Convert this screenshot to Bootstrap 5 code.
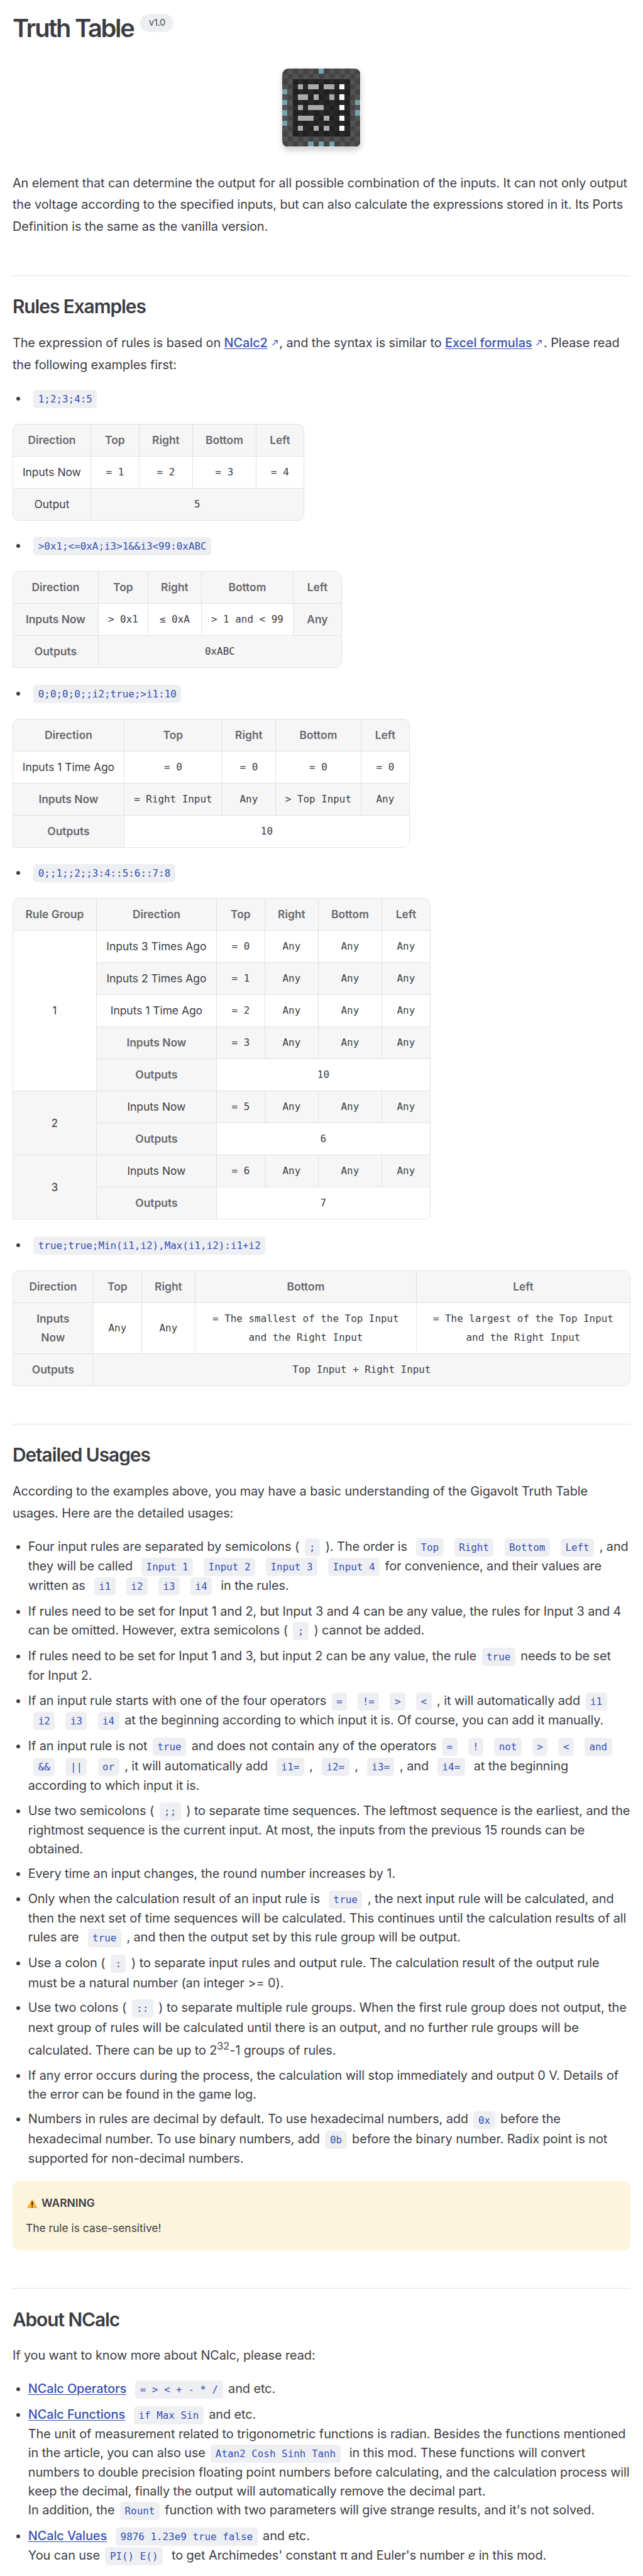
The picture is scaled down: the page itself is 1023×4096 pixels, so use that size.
<!DOCTYPE html>
<html lang="en">
<head>
<meta charset="utf-8">
<meta name="viewport" content="width=device-width, initial-scale=1">
<title>Truth Table</title>
<link href="https://cdn.jsdelivr.net/npm/bootstrap@5.3.0/dist/css/bootstrap.min.css" rel="stylesheet">
<style>
html{font-size:19.8917px}
body{font-family:Inter,"Noto Sans",sans-serif;font-size:1rem;line-height:1.75rem;letter-spacing:-.0043rem;color:#3c3c43;background:#fff;text-rendering:optimizeLegibility;overflow-x:hidden}
.doc{padding:1rem 1rem 0}
h1,h2{font-weight:600;color:#3c3c43;margin:0}
h1{font-size:2rem;line-height:2.5rem;letter-spacing:-.057em}
h2{font-size:1.5rem;line-height:2rem;letter-spacing:-.035em;margin:3rem 0 1rem;padding-top:1.5rem;border-top:1px solid #e2e2e3}
p{margin:0 0 1rem}
.ver{font-size:.75rem;line-height:1.3rem;letter-spacing:-.03rem;font-weight:500;height:1.43rem;padding:.065rem .64rem .065rem .67rem;border-radius:.75rem;background:#eeeff3;color:rgba(60,60,67,.78);margin:.13rem 0 0 .55rem}
.chip{display:block;width:6.25rem;height:6.25rem;margin:2rem auto;border-radius:.5rem;box-shadow:0 .25rem .5rem rgba(0,0,0,.2)}
ul{margin:calc(1rem + 1px) 0 calc(1rem - 1px);padding-left:1.25rem;line-height:1.5rem}
li+li{margin-top:.5rem}
li code{font-family:"DejaVu Sans Mono","Liberation Mono",monospace;font-size:.7995rem;line-height:1.518rem;letter-spacing:0;color:#3451b2;background:#eeeff3;border-radius:.25rem;padding:.25rem .375rem;margin:0 .43rem;white-space:pre}
.doc a{color:#3451b2;font-weight:500;text-decoration:underline;text-underline-offset:.125rem}
.ext{width:.6875rem;height:.6875rem;margin-left:.25rem;fill:#3451b2;vertical-align:baseline}
sup{position:static;font-size:.82em;line-height:1.5rem;vertical-align:super}
.frame{border:1px solid #e2e2e3;border-radius:.5rem;overflow:hidden;width:fit-content;margin:1.204rem 0 1.277rem}
.frame.sq{border-bottom-left-radius:0}
.rules{table-layout:fixed;color:#3c3c43;font-size:.875rem;line-height:1.5rem;letter-spacing:0;border-collapse:separate;border-spacing:0}
.rules>thead{vertical-align:middle}
.rules>*>tr>*{padding:0;height:51px;color:#3c3c43;background:#fff;border:0 solid #e2e2e3;border-width:0 1px 1px 0;box-shadow:none;white-space:nowrap}
.rules>*>tr>.e{border-right-width:0}
.rules>*>tr>.b{border-bottom-width:0;height:50px}
.rules>tbody>tr:nth-child(2n)>*{background:#f6f6f7}
.rules>*>tr>th{background:#f6f6f7;color:#67676c;font-weight:600}
.rules .m{font-family:"DejaVu Sans Mono","Liberation Mono",monospace;font-size:.7995rem}
.rules>*>tr>.two{height:81px}
.t1{width:462px}.t1 col:nth-child(1){width:124px}.t1 col:nth-child(2){width:77px}.t1 col:nth-child(3){width:85px}.t1 col:nth-child(4){width:101px}
.t2{width:522px}.t2 col:nth-child(1){width:136px}.t2 col:nth-child(2){width:79px}.t2 col:nth-child(3){width:85px}.t2 col:nth-child(4){width:146px}
.t3{width:630px}.t3 col:nth-child(1){width:177px}.t3 col:nth-child(2){width:156px}.t3 col:nth-child(3){width:85px}.t3 col:nth-child(4){width:136px}
.t4{width:663px}.t4 col:nth-child(1){width:133px}.t4 col:nth-child(2){width:191px}.t4 col:nth-child(3){width:77px}.t4 col:nth-child(4){width:85px}.t4 col:nth-child(5){width:101px}
.t5{width:981px}.t5 col:nth-child(1){width:128px}.t5 col:nth-child(2){width:77px}.t5 col:nth-child(3){width:85px}.t5 col:nth-child(4){width:352px}
.warn{background:#fcf4dc;border-radius:.5rem;padding:1.03rem 1.06rem;font-size:.875rem;line-height:1.5rem;letter-spacing:0;margin:1rem 0 0;height:5.555rem}
.warn p{margin:0 0 .5rem}
.warn .tri{width:.83rem;height:.72rem;margin:.1rem .31rem 0 .12rem}
</style>
</head>
<body>
<main class="doc text-nowrap">
<h1 class="d-flex align-items-start">Truth Table <span class="ver">v1.0</span></h1>
<svg class="chip" viewBox="0 0 15 15" shape-rendering="crispEdges">
<defs>
<pattern id="rim" width="2" height="2" patternUnits="userSpaceOnUse"><path fill="#434343" d="M0 0h2v2H0z"/><path fill="#535353" d="M1 0h1v1H1zM0 1h1v1H0z"/></pattern>
<pattern id="core" width="2" height="2" patternUnits="userSpaceOnUse"><path fill="#202020" d="M0 0h2v2H0z"/><path fill="#292929" d="M1 0h1v1H1zM0 1h1v1H0z"/></pattern>
</defs>
<path fill="url(#rim)" d="M0 0h15v15H0z"/>
<path fill="url(#core)" d="M2 2h11v11H2z"/>
<path fill="#72a4b2" d="M7 0h1v1H7zM0 4h1v1H0zM0 6h1v1H0zM0 8h1v1H0zM0 10h1v1H0zM14 6h1v1h-1zM14 8h1v1h-1zM5 14h1v1H5zM7 14h1v1H7zM9 14h1v1H9z"/>
<path fill="#aaa" d="M3 3h1v1H3zM5 3h2v1H5zM8 3h2v1H8zM3 5h2v1H3zM6 5h1v1H6zM9 5h1v1H9zM3 7h1v1H3zM5 7h3v1H5zM3 9h3v1H3zM8 9h1v1H8zM3 11h1v1H3zM6 11h1v1H6zM8 11h1v1H8z"/>
<path fill="#fff" d="M11 3h1v1h-1zM11 5h1v1h-1zM11 7h1v1h-1zM11 9h1v1h-1zM11 11h1v1h-1z"/>
</svg>
<p>An element that can determine the output for all possible combination of the inputs. It can not only output<br>the voltage according to the specified inputs, but can also calculate the expressions stored in it. Its Ports<br>Definition is the same as the vanilla version.</p>

<h2>Rules Examples</h2>
<p>The expression of rules is based on <a href="#">NCalc2</a><svg class="ext" viewBox="0 0 24 24"><path d="M9 5v2h6.59L4 18.59 5.41 20 17 8.41V15h2V5z"/></svg>, and the syntax is similar to <a href="#">Excel formulas</a><svg class="ext" viewBox="0 0 24 24"><path d="M9 5v2h6.59L4 18.59 5.41 20 17 8.41V15h2V5z"/></svg>. Please read<br>the following examples first:</p>

<ul><li><code>1;2;3;4:5</code></li></ul>
<div class="frame"><table class="table rules t1 mb-0 text-center align-middle">
<colgroup><col><col><col><col><col></colgroup>
<thead><tr><th>Direction</th><th>Top</th><th>Right</th><th>Bottom</th><th class="e">Left</th></tr></thead>
<tbody>
<tr><td>Inputs Now</td><td class="m">= 1</td><td class="m">= 2</td><td class="m">= 3</td><td class="m e">= 4</td></tr>
<tr><td class="b">Output</td><td class="m e b" colspan="4">5</td></tr>
</tbody></table></div>

<ul><li><code>&gt;0x1;&lt;=0xA;i3&gt;1&amp;&amp;i3&lt;99:0xABC</code></li></ul>
<div class="frame sq"><table class="table rules t2 mb-0 text-center align-middle">
<colgroup><col><col><col><col><col></colgroup>
<thead><tr><th>Direction</th><th>Top</th><th>Right</th><th>Bottom</th><th class="e">Left</th></tr></thead>
<tbody>
<tr><th>Inputs Now</th><td class="m">&gt; 0x1</td><td class="m">≤ 0xA</td><td class="m">&gt; 1 and &lt; 99</td><th class="e">Any</th></tr>
<tr><th class="b">Outputs</th><td class="m e b" colspan="4">0xABC</td></tr>
</tbody></table></div>

<ul><li><code>0;0;0;0;;i2;true;&gt;i1:10</code></li></ul>
<div class="frame sq"><table class="table rules t3 mb-0 text-center align-middle">
<colgroup><col><col><col><col><col></colgroup>
<thead><tr><th>Direction</th><th>Top</th><th>Right</th><th>Bottom</th><th class="e">Left</th></tr></thead>
<tbody>
<tr><td>Inputs 1 Time Ago</td><td class="m">= 0</td><td class="m">= 0</td><td class="m">= 0</td><td class="m e">= 0</td></tr>
<tr><th>Inputs Now</th><td class="m">= Right Input</td><td class="m">Any</td><td class="m">&gt; Top Input</td><td class="m e">Any</td></tr>
<tr><th class="b">Outputs</th><td class="m e b" colspan="4">10</td></tr>
</tbody></table></div>

<ul><li><code>0;;1;;2;;3:4::5:6::7:8</code></li></ul>
<div class="frame sq"><table class="table rules t4 mb-0 text-center align-middle">
<colgroup><col><col><col><col><col><col></colgroup>
<thead><tr><th>Rule Group</th><th>Direction</th><th>Top</th><th>Right</th><th>Bottom</th><th class="e">Left</th></tr></thead>
<tbody>
<tr><td rowspan="5">1</td><td>Inputs 3 Times Ago</td><td class="m">= 0</td><td class="m">Any</td><td class="m">Any</td><td class="m e">Any</td></tr>
<tr><td>Inputs 2 Times Ago</td><td class="m">= 1</td><td class="m">Any</td><td class="m">Any</td><td class="m e">Any</td></tr>
<tr><td>Inputs 1 Time Ago</td><td class="m">= 2</td><td class="m">Any</td><td class="m">Any</td><td class="m e">Any</td></tr>
<tr><th>Inputs Now</th><td class="m">= 3</td><td class="m">Any</td><td class="m">Any</td><td class="m e">Any</td></tr>
<tr><th>Outputs</th><td class="m e" colspan="4">10</td></tr>
<tr><td rowspan="2">2</td><td>Inputs Now</td><td class="m">= 5</td><td class="m">Any</td><td class="m">Any</td><td class="m e">Any</td></tr>
<tr><th>Outputs</th><td class="m e" colspan="4">6</td></tr>
<tr><td class="b" rowspan="2">3</td><td>Inputs Now</td><td class="m">= 6</td><td class="m">Any</td><td class="m">Any</td><td class="m e">Any</td></tr>
<tr><th class="b">Outputs</th><td class="m e b" colspan="4">7</td></tr>
</tbody></table></div>

<ul><li><code>true;true;Min(i1,i2),Max(i1,i2):i1+i2</code></li></ul>
<div class="frame sq"><table class="table rules t5 mb-0 text-center align-middle">
<colgroup><col><col><col><col><col></colgroup>
<thead><tr><th>Direction</th><th>Top</th><th>Right</th><th>Bottom</th><th class="e">Left</th></tr></thead>
<tbody>
<tr><th class="two">Inputs<br>Now</th><td class="m">Any</td><td class="m">Any</td><td class="m">= The smallest of the Top Input<br>and the Right Input</td><td class="m e">= The largest of the Top Input<br>and the Right Input</td></tr>
<tr><th class="b">Outputs</th><td class="m e b" colspan="4">Top Input + Right Input</td></tr>
</tbody></table></div>

<h2>Detailed Usages</h2>
<p>According to the examples above, you may have a basic understanding of the Gigavolt Truth Table<br>usages. Here are the detailed usages:</p>
<ul>
<li>Four input rules are separated by semicolons (<code>;</code>). The order is <code>Top</code><code>Right</code><code>Bottom</code><code>Left</code>, and<br>they will be called <code>Input 1</code><code>Input 2</code><code>Input 3</code><code>Input 4</code>for convenience, and their values are<br>written as <code>i1</code><code>i2</code><code>i3</code><code>i4</code> in the rules.</li>
<li>If rules need to be set for Input 1 and 2, but Input 3 and 4 can be any value, the rules for Input 3 and 4<br>can be omitted. However, extra semicolons (<code>;</code>) cannot be added.</li>
<li>If rules need to be set for Input 1 and 3, but input 2 can be any value, the rule<code>true</code>needs to be set<br>for Input 2.</li>
<li>If an input rule starts with one of the four operators<code>=</code><code>!=</code><code>&gt;</code><code>&lt;</code>, it will automatically add<code>i1</code><br><code>i2</code><code>i3</code><code>i4</code>at the beginning according to which input it is. Of course, you can add it manually.</li>
<li>If an input rule is not<code>true</code>and does not contain any of the operators<code>=</code><code>!</code><code>not</code><code>&gt;</code><code>&lt;</code><code>and</code><br><code>&amp;&amp;</code><code>||</code><code>or</code>, it will automatically add <code>i1=</code>, <code>i2=</code>, <code>i3=</code>, and <code>i4=</code> at the beginning<br>according to which input it is.</li>
<li>Use two semicolons (<code>;;</code>) to separate time sequences. The leftmost sequence is the earliest, and the<br>rightmost sequence is the current input. At most, the inputs from the previous 15 rounds can be<br>obtained.</li>
<li>Every time an input changes, the round number increases by 1.</li>
<li>Only when the calculation result of an input rule is <code>true</code>, the next input rule will be calculated, and<br>then the next set of time sequences will be calculated. This continues until the calculation results of all<br>rules are <code>true</code>, and then the output set by this rule group will be output.</li>
<li>Use a colon (<code>:</code>) to separate input rules and output rule. The calculation result of the output rule<br>must be a natural number (an integer &gt;= 0).</li>
<li>Use two colons (<code>::</code>) to separate multiple rule groups. When the first rule group does not output, the<br>next group of rules will be calculated until there is an output, and no further rule groups will be<br>calculated. There can be up to 2<sup>32</sup>-1 groups of rules.</li>
<li>If any error occurs during the process, the calculation will stop immediately and output 0 V. Details of<br>the error can be found in the game log.</li>
<li>Numbers in rules are decimal by default. To use hexadecimal numbers, add<code>0x</code>before the<br>hexadecimal number. To use binary numbers, add<code>0b</code>before the binary number. Radix point is not<br>supported for non-decimal numbers.</li>
</ul>
<div class="warn">
<p class="fw-semibold d-flex align-items-center"><svg class="tri" viewBox="0 0 24 21"><path fill="#ffb02e" d="M10.9.8a1.2 1.2 0 0 1 2.2 0L23.8 19c.5 1-.1 2-1.2 2H1.4C.3 21-.3 20 .2 19z"/><path stroke="#111" stroke-width="2.6" stroke-linecap="round" d="M12 6.500v7"/><circle cx="12" cy="17.500" r="1.500" fill="#111"/></svg>WARNING</p>
<p>The rule is case-sensitive!</p>
</div>

<h2>About NCalc</h2>
<p>If you want to know more about NCalc, please read:</p>
<ul class="mb-0">
<li><a href="#">NCalc Operators</a> <code>= &gt; &lt; + - * /</code>and etc.</li>
<li><a href="#">NCalc Functions</a> <code>if Max Sin</code>and etc.<br>The unit of measurement related to trigonometric functions is radian. Besides the functions mentioned<br>in the article, you can also use<code>Atan2 Cosh Sinh Tanh</code> in this mod. These functions will convert<br>numbers to double precision floating point numbers before calculating, and the calculation process will<br>keep the decimal, finally the output will automatically remove the decimal part.<br>In addition, the<code>Rount</code>function with two parameters will give strange results, and it's not solved.</li>
<li><a href="#">NCalc Values</a> <code>9876 1.23e9 true false</code>and etc.<br>You can use<code>PI() E()</code> to get Archimedes' constant π and Euler's number <em>e</em> in this mod.</li>
</ul>
</main>
<script src="https://cdn.jsdelivr.net/npm/bootstrap@5.3.0/dist/js/bootstrap.bundle.min.js"></script>
</body>
</html>
